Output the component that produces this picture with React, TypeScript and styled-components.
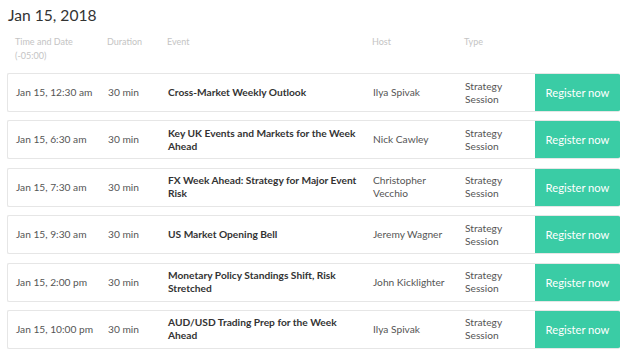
import React from 'react'
import styled, { createGlobalStyle } from 'styled-components'

const Global = createGlobalStyle`
  body {
    margin: 0;
    background: #fff;
    font-family: Lato, 'Open Sans', sans-serif;
    color: #444;
  }
`

type Webinar = {
  time: string
  event: string
  host: string
}

const webinars: Webinar[] = [
  { time: 'Jan 15, 12:30 am', event: 'Cross-Market Weekly Outlook', host: 'Ilya Spivak' },
  { time: 'Jan 15, 6:30 am', event: 'Key UK Events and Markets for the Week Ahead', host: 'Nick Cawley' },
  { time: 'Jan 15, 7:30 am', event: 'FX Week Ahead: Strategy for Major Event Risk', host: 'Christopher Vecchio' },
  { time: 'Jan 15, 9:30 am', event: 'US Market Opening Bell', host: 'Jeremy Wagner' },
  { time: 'Jan 15, 2:00 pm', event: 'Monetary Policy Standings Shift, Risk Stretched', host: 'John Kicklighter' },
  { time: 'Jan 15, 10:00 pm', event: 'AUD/USD Trading Prep for the Week Ahead', host: 'Ilya Spivak' },
]

export default function App() {
  return (
    <Page>
      <Global />
      <Title>Jan 15, 2018</Title>
      <HeadRow>
        <Cell $w={92}>Time and Date<br />(-05:00)</Cell>
        <Cell $w={60}>Duration</Cell>
        <Cell $w={205}>Event</Cell>
        <Cell $w={92}>Host</Cell>
        <Cell $w={70}>Type</Cell>
      </HeadRow>
      <List>
        {webinars.map((w, i) => (
          <Row key={i}>
            <Cell $w={92}>{w.time}</Cell>
            <Cell $w={60}>30 min</Cell>
            <EventCell $w={205}>{w.event}</EventCell>
            <HostCell $w={92}>{w.host}</HostCell>
            <Cell $w={70}>Strategy<br />Session</Cell>
            <Register>Register now</Register>
          </Row>
        ))}
      </List>
    </Page>
  )
}

const Page = styled.div`
  padding: 5px 4px 0 7px;
  width: 613px;
`

const Title = styled.h2`
  margin: 0 0 0 1px;
  font-size: 15.6px;
  font-weight: 400;
  color: #333;
  line-height: 20px;
`

const Cell = styled.div<{ $w: number }>`
  width: ${p => p.$w}px;
  flex: none;
  box-sizing: border-box;
  font-size: 10.2px;
  line-height: 13px;
`

const HeadRow = styled.div`
  display: flex;
  padding: 10px 0 0 8px;
  height: 38px;
  color: #c4c4c4;
  box-sizing: border-box;
  ${Cell} {
    font-size: 9px;
    line-height: 14px;
  }
`

const List = styled.div`
  display: flex;
  flex-direction: column;
  gap: 8.4px;
  margin-top: 10px;
`

const Row = styled.div`
  display: flex;
  align-items: center;
  height: 39px;
  padding-left: 8px;
  border: 1px solid #e6e6e6;
  border-right: none;
  border-radius: 2px;
  box-sizing: border-box;
  color: #555;
  overflow: hidden;
`

const EventCell = styled(Cell)`
  padding-right: 16px;
  font-weight: 700;
  color: #333;
`

const HostCell = styled(Cell)`
  padding-right: 16px;
`

const Register = styled.button`
  margin-left: auto;
  align-self: stretch;
  margin-top: -1px;
  margin-bottom: -1px;
  width: 85px;
  border: none;
  background: #3acca5;
  color: #fff;
  font-family: Lato, sans-serif;
  font-size: 11.2px;
  padding: 0;
  cursor: pointer;
`
